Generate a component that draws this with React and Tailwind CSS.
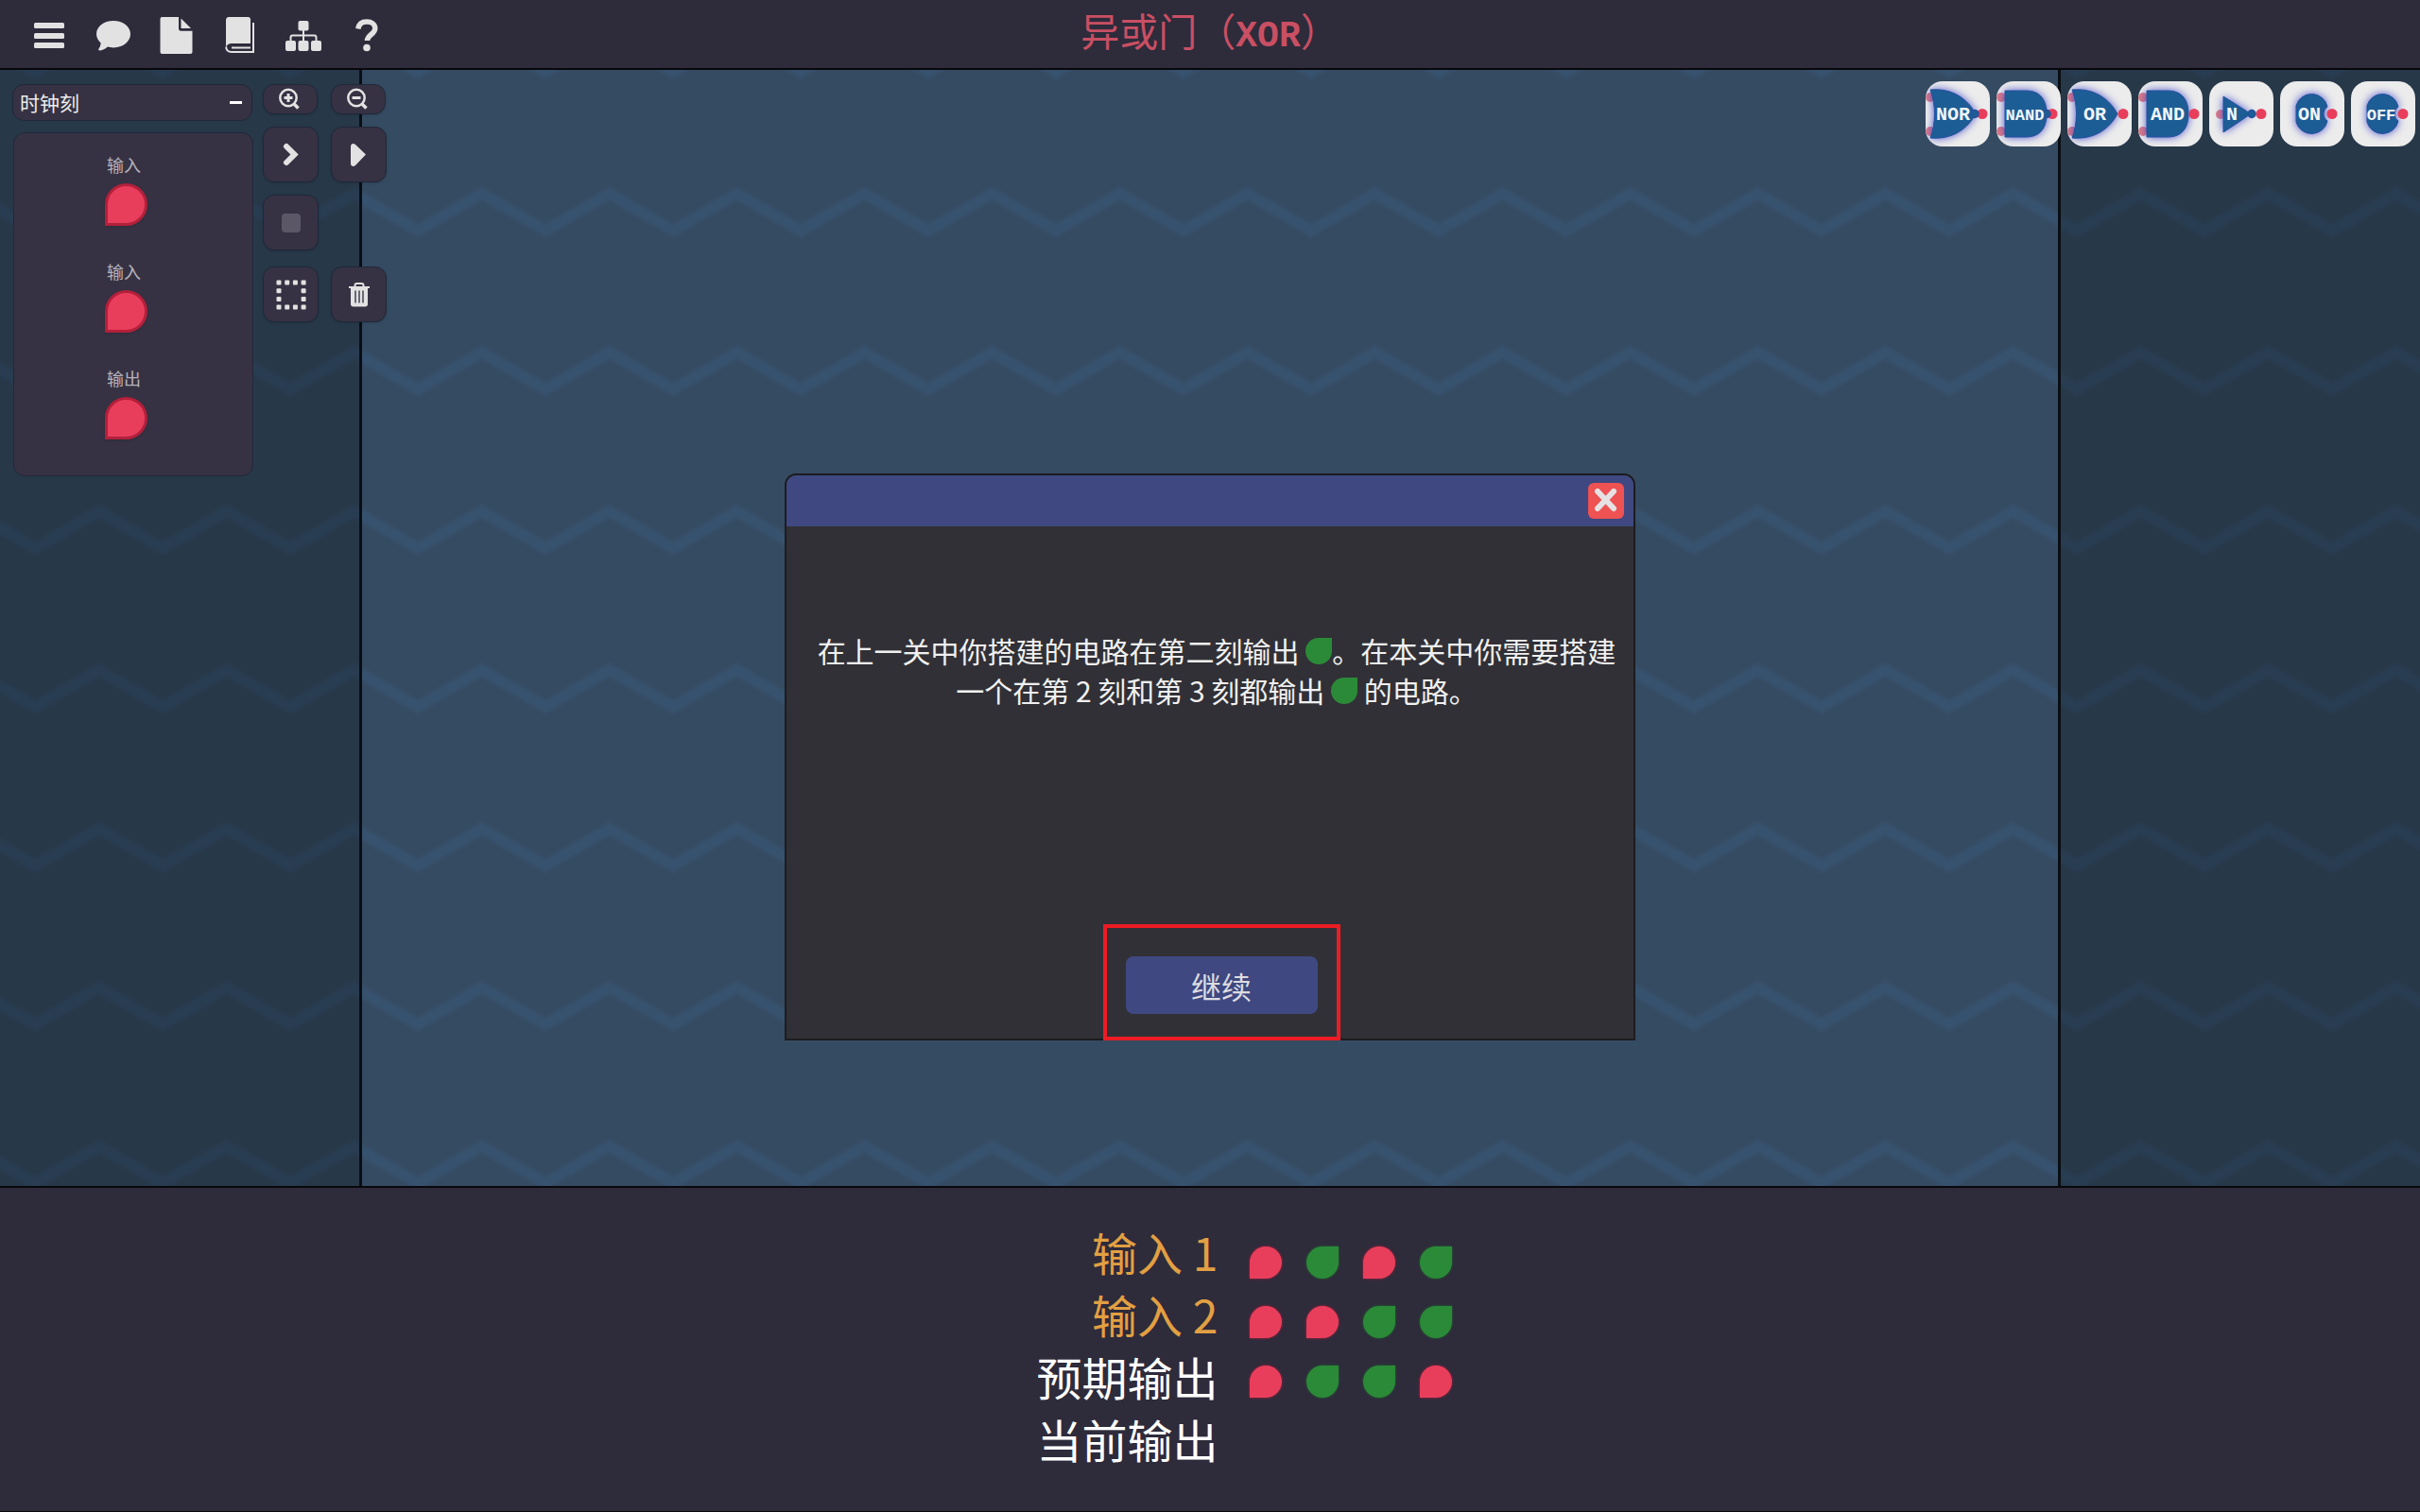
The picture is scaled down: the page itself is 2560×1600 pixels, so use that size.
import React, { useState } from 'react';

const LEVEL_ROWS = [
  { label: '输入 1', color: 'text-[#e2a042]', values: [0, 1, 0, 1] },
  { label: '输入 2', color: 'text-[#e2a042]', values: [0, 0, 1, 1] },
  { label: '预期输出', color: 'text-white', values: [0, 1, 1, 0] },
  { label: '当前输出', color: 'text-white', values: [] },
];

const PINS = ['输入', '输入', '输出'];

const toolButton =
  'flex items-center justify-center rounded-xl border border-[#20283a] bg-[#363243] text-[#e2e2e2] shadow-sm';

const Leaf = ({ on, className }) => (
  <span
    role="img"
    aria-label={on ? '开' : '关'}
    className={`inline-block rounded-full ${on ? 'rounded-tr-none bg-[#2b8a38]' : 'rounded-bl-none bg-[#e83e5c]'} ${className}`}
  />
);

/* Toolbar icons */
const MenuIcon = () => (
  <svg width="34" height="30" viewBox="0 0 34 30" fill="currentColor">
    <rect x="1" y="1" width="32" height="6" rx="1.5" />
    <rect x="1" y="12" width="32" height="6" rx="1.5" />
    <rect x="1" y="22" width="32" height="6" rx="1.5" />
  </svg>
);

const CommentIcon = () => (
  <svg width="38" height="34" viewBox="0 0 38 34" fill="currentColor">
    <path d="M19 1C9 1 1 7 1 15c0 4 2 7 4.600 9.500C5.500 27 4.500 29 3.500 30.500c-.8 1.200 0 2.200 1.200 2 3.300-.5 6-1.800 8-3.900 2 .5 4.100.8 6.300.8 10 0 18-6.400 18-14.400S29 1 19 1z" />
  </svg>
);

const FileIcon = () => (
  <svg width="36" height="40" viewBox="0 0 36 40" fill="currentColor">
    <path d="M2.500 0H20v12.500c0 1.400 1 2.200 2.200 2.200H34.500V37c0 1.200-1 2-2 2h-30c-1.200 0-2-.8-2-2V2c0-1.200.8-2 2-2z" />
    <path d="M22.500 1.500v10.500H33z" />
  </svg>
);

const BookIcon = () => (
  <svg width="32" height="40" viewBox="0 0 32 40">
    <path d="M4 0h20.500c1.500 0 2.500 1 2.500 2.500V28H7c-3 0-5 1.500-6 4V3.500C1 1.300 2.200 0 4 0z" fill="currentColor" />
    <path d="M30 6v31H7C3.500 37 1.200 35 1.200 31.500" fill="none" stroke="currentColor" strokeWidth="2" />
    <path d="M7 32.500h20" fill="none" stroke="currentColor" strokeWidth="2" />
  </svg>
);

const SitemapIcon = () => (
  <svg width="38" height="34" viewBox="0 0 38 34" fill="currentColor">
    <rect x="13.500" y="1" width="11" height="10.500" rx="2" />
    <rect x="0" y="22" width="11" height="11" rx="2" />
    <rect x="13.500" y="22" width="11" height="11" rx="2" />
    <rect x="27" y="22" width="11" height="11" rx="2" />
    <path d="M19 11v12M5.500 22v-3.500q0-2 2-2h23q2 0 2 2V22" fill="none" stroke="currentColor" strokeWidth="2" />
  </svg>
);

const QuestionIcon = () => (
  <svg width="24" height="36" viewBox="0 0 24 36" fill="currentColor">
    <path
      d="M2.800 10.500C3.500 5.500 7 3 12 3c5 0 8.800 2.600 8.800 7 0 6.500-8.300 6.500-8.300 13"
      fill="none"
      stroke="currentColor"
      strokeWidth="5.500"
    />
    <circle cx="12" cy="30.500" r="3.800" />
  </svg>
);

const ZoomIcon = ({ plus }) => (
  <svg width="24" height="24" viewBox="0 0 24 24" fill="none" stroke="currentColor" strokeWidth="2.500">
    <circle cx="10" cy="10.500" r="8.700" />
    <path d="M15.500 16.500l5 5" strokeWidth="3.500" />
    <path d="M5.500 10.500h9" strokeWidth="3" />
    {plus && <path d="M10 6v9" strokeWidth="3" />}
  </svg>
);

const StepIcon = () => (
  <svg width="20" height="26" viewBox="0 0 20 26">
    <path d="M5 4l8.500 8.500L5 21" fill="none" stroke="currentColor" strokeWidth="6" strokeLinecap="round" />
  </svg>
);

const PlayIcon = () => (
  <svg width="20" height="26" viewBox="0 0 20 26" fill="currentColor">
    <path d="M1 4c0-3 3-4 5-2l11 10.500L6 24c-2 2-5 1-5-2z" />
  </svg>
);

const SelectIcon = () => (
  <svg width="32" height="32" viewBox="0 0 32 32" fill="currentColor">
    {[0, 1, 2, 3].map((row) =>
      [0, 1, 2, 3]
        .filter((col) => row % 3 === 0 || col % 3 === 0)
        .map((col) => <rect key={`${row}-${col}`} x={0.5 + col * 8.7} y={0.5 + row * 8.7} width="5" height="5" rx="1" />)
    )}
  </svg>
);

const TrashIcon = () => (
  <svg width="24" height="28" viewBox="0 0 24 28">
    <path d="M1 6h22M7.500 5.500V4q0-2 2-2h5q2 0 2 2V5.500" fill="none" stroke="currentColor" strokeWidth="2" />
    <path d="M3 6.500h18V24c0 1.500-1 2.500-2.500 2.500h-13C4 26.500 3 25.500 3 24z" fill="currentColor" />
    <path d="M8 9.500v13M12 9.500v13M16 9.500v13" stroke="#6b6774" strokeWidth="2" />
  </svg>
);

const CloseIcon = () => (
  <svg width="26" height="26" viewBox="0 0 26 26">
    <path d="M4 3l17 18M21 3L4 21" stroke="#e6e2e4" strokeWidth="6" strokeLinecap="round" />
  </svg>
);

/* Gates of the component bar */
const OR_BODY = 'M5 9C30 7 45 20 53 34.500 45 49 30 62 5 60 11 44 11 25 5 9z';
const AND_BODY = 'M9 10h22c17 0 22 12 22 24.500S48 59 31 59H9z';
const KNOB_BODY = 'M50 27A17 17 0 0 0 17 26v17A17 17 0 0 0 50 42A9 9 0 0 1 50 27z';

const GATES = [
  { name: 'NOR', body: OR_BODY, inputs: [17, 53], bubble: 52, out: 60, textX: 29, size: 'text-[20px]' },
  { name: 'NAND', body: AND_BODY, inputs: [17, 53], bubble: 53, out: 59, textX: 30, size: 'text-[17px]' },
  { name: 'OR', body: OR_BODY, inputs: [17, 53], out: 59, textX: 29, size: 'text-[20px]' },
  { name: 'AND', body: AND_BODY, inputs: [17, 53], out: 59, textX: 31, size: 'text-[20px]' },
  { name: 'N', body: 'M15 16l29 18.500L15 54z', inputs: [35], bubble: 45, out: 55, textX: 24, size: 'text-[20px]' },
  { name: 'ON', body: KNOB_BODY, inputs: [], out: 55, textX: 31, size: 'text-[20px]' },
  { name: 'OFF', body: KNOB_BODY, inputs: [], out: 55, textX: 32, size: 'text-[17px]' },
];

const GateButton = ({ gate }) => (
  <button type="button" aria-label={gate.name} className="h-[69px] w-[68px] overflow-hidden rounded-[18px] bg-[#ececec]">
    <svg width="68" height="69" viewBox="0 0 68 69">
      {gate.inputs.map((y) => (
        <circle key={y} cx={gate.name === 'N' ? 12 : 5} cy={y} r="5" fill="#dd7a86" />
      ))}
      <path d={gate.body} fill="#1d5d95" className="drop-shadow-[0_0_5px_#3c43c8]" />
      <path d={gate.body} fill="none" stroke="#2450a0" strokeWidth="1" />
      <circle cx={gate.out} cy="34.500" r="5.500" fill="#e83e5c" />
      {gate.bubble && <circle cx={gate.bubble} cy="34.500" r="4" fill="#1d5d95" stroke="#2450a0" strokeWidth="1.500" />}
      <text
        x={gate.textX}
        y="41"
        textAnchor="middle"
        fill="#f2f6fa"
        className={`font-['Liberation_Mono',monospace] font-bold ${gate.size}`}
      >
        {gate.name}
      </text>
    </svg>
  </button>
);

const Zigzag = () => (
  <svg className="absolute inset-0 h-full w-full">
    <defs>
      <pattern id="zigzag" x="37" y="66" width="135" height="168" patternUnits="userSpaceOnUse">
        <g fill="none" stroke="#36526e">
          <path d="M-67.500 65L0 104L67.500 65L135 104L202.500 65" strokeWidth="15" opacity="0.4" />
          <path d="M-67.500 65L0 104L67.500 65L135 104L202.500 65" strokeWidth="9" />
        </g>
      </pattern>
    </defs>
    <rect width="100%" height="100%" fill="url(#zigzag)" />
  </svg>
);

const Header = () => {
  const items = [
    { label: '菜单', icon: <MenuIcon />, width: 'w-[68px]' },
    { label: '对话', icon: <CommentIcon />, width: 'w-[68px]' },
    { label: '文件', icon: <FileIcon />, width: 'w-[66px]' },
    { label: '手册', icon: <BookIcon />, width: 'w-[68px]' },
    { label: '关卡', icon: <SitemapIcon />, width: 'w-[66px]' },
    { label: '帮助', icon: <QuestionIcon />, width: 'w-[68px]' },
  ];

  return (
    <header className="grid h-[74px] grid-cols-[1fr_auto_1fr] items-center border-b-2 border-[#08080c] bg-[#2e2b3b]">
      <nav className="flex items-center pl-[18px] text-[#e2e2e2]">
        {items.map((item) => (
          <button key={item.label} type="button" aria-label={item.label} className={`flex h-[72px] items-center justify-center pt-[3px] ${item.width}`}>
            {item.icon}
          </button>
        ))}
      </nav>
      <h1 className="pb-0.5 text-[41px] leading-[60px] text-[#c94f63]">
        异或门（<span className="font-['Liberation_Mono',monospace] text-[38px] font-bold">XOR</span>）
      </h1>
    </header>
  );
};

const Tools = () => {
  const [open, setOpen] = useState(true);

  return (
    <div className="absolute top-[15px] left-[13px] flex items-start gap-[10px]">
      <div className="flex w-[255px] flex-col gap-3">
        <button
          type="button"
          aria-expanded={open}
          onClick={() => setOpen(!open)}
          className="mr-px flex h-[39px] items-center justify-between rounded-xl border border-[#20283a] bg-[#363243] pr-2 pl-[7px] text-[21px] text-[#ececec]"
        >
          时钟刻
          <span className="mr-0.5 h-[3px] w-[13px] bg-white" />
        </button>
        {open && (
          <ul className="ml-px flex flex-col gap-[35px] rounded-xl border border-[#20283a] bg-[#363243] pt-[20px] pr-5 pb-[38px]">
            {PINS.map((pin, i) => (
              <li key={i} className="flex flex-col items-center gap-[7px]">
                <span className="text-[18px] leading-[26px] text-[#b6b3bc]">{pin}</span>
                <Leaf className="size-[45px] ml-1 border-[3px] border-[#b3203b] shadow" />
              </li>
            ))}
          </ul>
        )}
      </div>
      <div className="grid grid-cols-2 gap-[13px]">
        <button type="button" aria-label="放大" className={`${toolButton} h-8 w-[58px]`}><ZoomIcon plus /></button>
        <button type="button" aria-label="缩小" className={`${toolButton} h-8 w-[58px]`}><ZoomIcon /></button>
        <button type="button" aria-label="单步" className={`${toolButton} size-[59px]`}><StepIcon /></button>
        <button type="button" aria-label="运行" className={`${toolButton} size-[59px]`}><PlayIcon /></button>
        <button type="button" aria-label="停止" disabled className={`${toolButton} mb-1 size-[59px]`}>
          <span className="size-5 rounded-sm bg-[#5b5767]" />
        </button>
        <span />
        <button type="button" aria-label="框选" className={`${toolButton} size-[59px]`}><SelectIcon /></button>
        <button type="button" aria-label="删除" className={`${toolButton} size-[59px]`}><TrashIcon /></button>
      </div>
    </div>
  );
};

const LevelDialog = ({ onClose }) => (
  <div className="pointer-events-none absolute inset-0 flex items-center justify-center pt-0.5">
    <div
      role="dialog"
      aria-label="关卡说明"
      className="pointer-events-auto flex h-[600px] w-[900px] flex-col rounded-t-xl border-2 border-[#1c1c1f] bg-[#313036]"
    >
      <div className="flex h-[54px] shrink-0 items-center justify-end rounded-t-[10px] bg-[#3f4880] pr-[10px]">
        <button type="button" aria-label="关闭" onClick={onClose} className="flex size-[38px] items-center justify-center rounded-md bg-[#ee5252]">
          <CloseIcon />
        </button>
      </div>
      <p className="flex-1 pt-[110px] pr-3 pl-[26px] text-center text-[30px] leading-[42px] text-[#f0f0f0]">
        在上一关中你搭建的电路在第二刻输出 <Leaf on className="size-7 align-[-2px]" />。在本关中你需要搭建一个在第 2 刻和第 3 刻都输出{' '}
        <Leaf on className="size-7 align-[-2px]" /> 的电路。
      </p>
      <div className="-mb-0.5 ml-6 self-center border-4 border-[#ec1c24] px-5 pt-[30px] pb-[24px]">
        <button type="button" onClick={onClose} className="h-[61px] w-[203px] rounded-lg bg-[#3f4880] text-[32px] text-[#dcdce0]">
          继续
        </button>
      </div>
    </div>
  </div>
);

const TruthTable = () => (
  <footer className="flex justify-center gap-[33px] border-t-2 border-b border-[#08080c] bg-[#2e2b3b] pt-[34px] pb-[44px] pl-[72px]">
    <div className="text-right text-[48px] leading-[66px]">
      {LEVEL_ROWS.map((row) => (
        <div key={row.label} className={row.color}>{row.label}</div>
      ))}
    </div>
    <div className="flex flex-col gap-[29px] pt-[28px]">
      {LEVEL_ROWS.map((row) => (
        <div key={row.label} className="flex gap-[26px]">
          {row.values.map((value, i) => (
            <Leaf key={i} on={value === 1} className={`size-[34px] ${value ? 'shadow-[0_0_3px_#1f6a2c]' : 'shadow-[0_0_3px_#b3203b]'}`} />
          ))}
        </div>
      ))}
    </div>
  </footer>
);

const App = () => {
  const [showDialog, setShowDialog] = useState(true);

  return (
    <div className="relative flex min-h-screen flex-col bg-[#2e2b3b] font-['Noto_Sans_CJK_SC',sans-serif]">
      <Header />
      <main className="relative flex flex-1 bg-[#354b62]">
        <Zigzag />
        <div className="relative w-[383px] border-r-[3px] border-[#0a0e13] bg-black/25" />
        <div className="flex-1" />
        <div className="relative w-[383px] border-l-[3px] border-[#0a0e13] bg-black/25" />
        <Tools />
        <div className="absolute top-3 right-[5px] flex gap-[7px]">
          {GATES.map((gate) => (
            <GateButton key={gate.name} gate={gate} />
          ))}
        </div>
      </main>
      <TruthTable />
      {showDialog && <LevelDialog onClose={() => setShowDialog(false)} />}
    </div>
  );
};

export default App;
